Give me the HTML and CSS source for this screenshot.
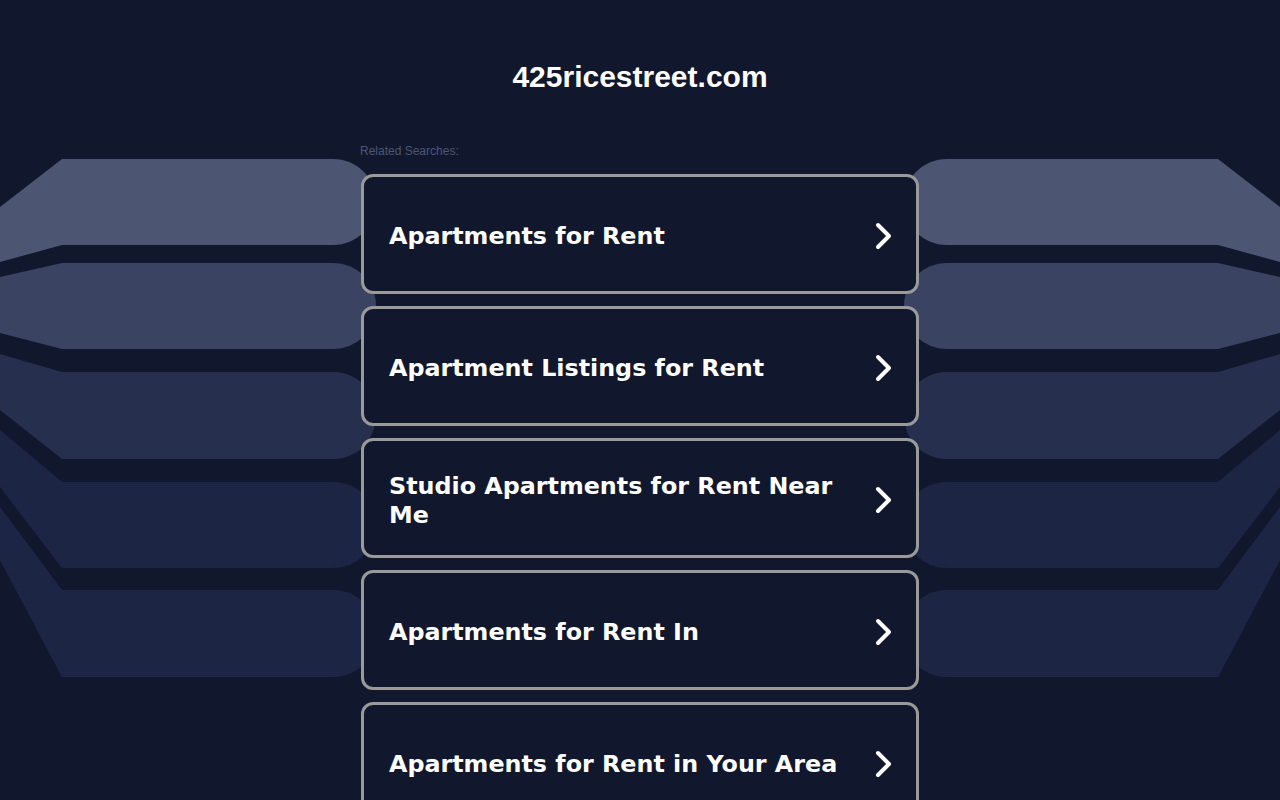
FILE: index.html
```html
<!DOCTYPE html>
<html lang="en">
<head>
<meta charset="utf-8">
<title>425ricestreet.com</title>
<link rel="stylesheet" href="styles.css">
</head>
<body>
<svg class="backdrop" width="1280" height="800" viewBox="0 0 1280 800" aria-hidden="true">
  <defs>
    <pattern id="dots" width="2" height="2" patternUnits="userSpaceOnUse">
      <rect width="2" height="2" fill="#1b2443"/>
      <rect width="1" height="1" fill="#1f2848"/>
    </pattern>
    <g id="bands">
      <path fill="#4c5673" d="M0,207 L62,159 L333,159 C357,159 376,178 376,202 C376,226 357,245 333,245 L62,245 L0,262 Z"/>
      <path fill="#3a4361" d="M0,277 L62,263 L333,263 C357,263 376,282 376,306 C376,330 357,349 333,349 L62,349 L0,333 Z"/>
      <path fill="#262f4e" d="M0,354 L62,372 L333,372 C357,372 376,391 376,415 C376,440 357,459 333,459 L62,459 L0,410 Z"/>
      <path fill="url(#dots)" d="M0,430 L62,482 L333,482 C357,482 376,501 376,525 C376,549 357,568 333,568 L62,568 L0,487 Z"/>
      <path fill="url(#dots)" d="M0,507 L62,590 L333,590 C357,590 376,609 376,633 C376,658 357,677 333,677 L62,677 L0,560 Z"/>
    </g>
  </defs>
  <use href="#bands"/>
  <use href="#bands" transform="translate(1280,0) scale(-1,1)"/>
</svg>
<main class="page">
  <h1 class="domain">425ricestreet.com</h1>
  <section class="related">
    <p class="related-label">Related Searches:</p>
    <ul class="links">
      <li><a class="link" href="#"><span class="link-text">Apartments for Rent</span><svg class="chev" width="20" height="30" viewBox="0 0 20 30"><path d="M4,4 L15,15 L4,26"/></svg></a></li>
      <li><a class="link" href="#"><span class="link-text">Apartment Listings for Rent</span><svg class="chev" width="20" height="30" viewBox="0 0 20 30"><path d="M4,4 L15,15 L4,26"/></svg></a></li>
      <li><a class="link" href="#"><span class="link-text">Studio Apartments for Rent Near Me</span><svg class="chev" width="20" height="30" viewBox="0 0 20 30"><path d="M4,4 L15,15 L4,26"/></svg></a></li>
      <li><a class="link" href="#"><span class="link-text">Apartments for Rent In</span><svg class="chev" width="20" height="30" viewBox="0 0 20 30"><path d="M4,4 L15,15 L4,26"/></svg></a></li>
      <li><a class="link" href="#"><span class="link-text">Apartments for Rent in Your Area</span><svg class="chev" width="20" height="30" viewBox="0 0 20 30"><path d="M4,4 L15,15 L4,26"/></svg></a></li>
    </ul>
  </section>
</main>
</body>
</html>
```
FILE: styles.css
```css
html, body {
  margin: 0;
  padding: 0;
  background: #11172d;
  height: 100%;
  overflow: hidden;
}
body {
  position: relative;
  font-family: "Liberation Sans", Arial, sans-serif;
  color: #fff;
}
.backdrop {
  position: absolute;
  left: 0;
  top: 0;
  z-index: 0;
}
.page {
  position: relative;
  z-index: 1;
  display: flex;
  flex-direction: column;
  align-items: center;
}
.domain {
  margin: 60px 0 0;
  font-family: "Liberation Sans", Arial, sans-serif;
  font-weight: bold;
  font-size: 30px;
  line-height: 34px;
  color: #fff;
}
.related {
  width: 558px;
  margin-top: 50px;
}
.related-label {
  margin: 0 0 16px -1px;
  font-size: 12px;
  line-height: 14px;
  color: #4d5775;
}
.links {
  list-style: none;
  margin: 0;
  padding: 0;
  display: flex;
  flex-direction: column;
  gap: 12px;
}
.link {
  box-sizing: border-box;
  height: 120px;
  display: flex;
  align-items: center;
  justify-content: space-between;
  padding: 5px 22px 0 25px;
  border: 3px solid #9a9a9a;
  border-radius: 12px;
  background: #11172d;
  color: #fff;
  text-decoration: none;
}
.link-text {
  font-family: "DejaVu Sans", Verdana, sans-serif;
  font-weight: bold;
  font-size: 23.8px;
  line-height: 29px;
  max-width: 460px;
}
.chev {
  flex: none;
  position: relative;
  top: -1px;
}
.chev path {
  fill: none;
  stroke: #fff;
  stroke-width: 4;
  stroke-linecap: round;
  stroke-linejoin: round;
}
```
